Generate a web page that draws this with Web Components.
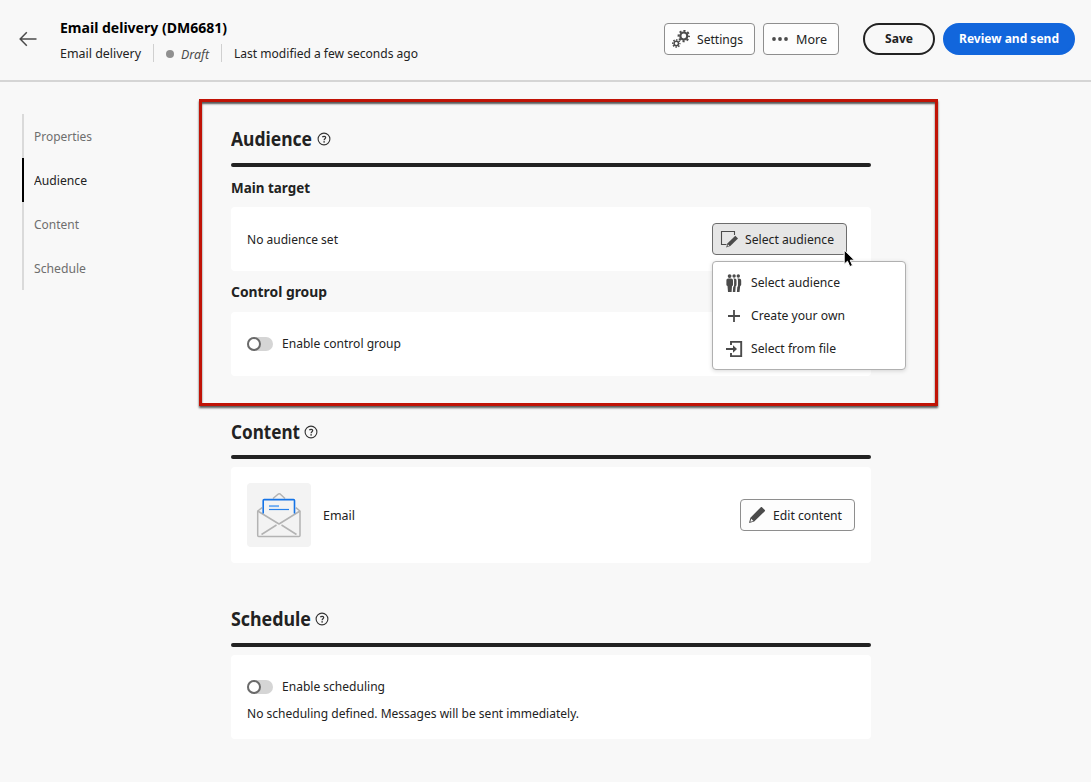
<!DOCTYPE html>
<html lang="en">
<head>
<meta charset="utf-8">
<title>Email delivery (DM6681)</title>
<style>
html,body{margin:0;height:100%}
body{background:#f8f8f8;color:#222;font:13px/18px "Noto Sans",sans-serif;overflow:hidden}
</style>
</head>
<body>
<delivery-page></delivery-page>
<script>
const define=(name,html,init)=>customElements.define(name,class extends HTMLElement{
  connectedCallback(){
    if(this.shadowRoot)return;
    const t=document.createElement('template');t.innerHTML=html;
    this.attachShadow({mode:'open'}).append(t.content.cloneNode(true));
    if(init)init.call(this,this.shadowRoot);
  }
});

/* One line of text, condensed so that it fills the width given in pixels. */
define('fit-label',`<style>:host{display:block;white-space:nowrap;flex:none}span{display:inline-block;vertical-align:top;white-space:nowrap;transform-origin:0 0}</style><span><slot></slot></span>`,function(root){
  const w=+this.getAttribute('w'),s=root.querySelector('span');
  this.style.width=w+'px';
  s.style.transform=`scaleX(${(w/s.getBoundingClientRect().width).toFixed(4)})`;
});

const ICONS={
 back:[18,16,'<path d="M17.500 8H1.300M7.800 1.300 1.200 8l6.600 6.700" fill="none" stroke="#4b4b4b" stroke-width="1.500"/>'],
 gears:[18,18,'<g fill="none" stroke="#4b4b4b"><circle cx="11.800" cy="6" r="3.500" stroke-width="2.200"/><circle cx="11.800" cy="6" r="5.200" stroke-width="2" stroke-dasharray="2.100 1.984" stroke-dashoffset="1.050"/><circle cx="4.300" cy="13.500" r="2.200" stroke-width="1.500"/><circle cx="4.300" cy="13.500" r="3.600" stroke-width="1.500" stroke-dasharray="1.500 1.327" stroke-dashoffset=".75"/></g>'],
 more:[18,18,'<g fill="#4b4b4b"><circle cx="3" cy="9" r="1.900"/><circle cx="9" cy="9" r="1.900"/><circle cx="15" cy="9" r="1.900"/></g>'],
 compose:[18,18,'<path d="M6.500 14.500H1.500V1.500H14.500V5" fill="none" stroke="#4b4b4b" stroke-width="1.100"/><path d="M15.300 5.700 18 8.400 10.300 16 6.100 17.500 7.600 13.300Z" fill="#4b4b4b"/><path d="m8 14.400 1.400 1.400-2 .7Z" fill="#e6e6e6"/>'],
 people:[18,18,'<g fill="#4b4b4b"><circle cx="4.600" cy="2.100" r="1.900"/><circle cx="9.100" cy="2" r="1.700"/><circle cx="13.300" cy="2" r="1.700"/><path d="M3.300 4.500h2.800c1.300 0 1.900.8 1.900 2v4.300c0 .8-.5 1.200-1 1.200l-.4 6H3l-.5-6c-.7 0-1.100-.5-1.100-1.200V6.500c0-1.200.7-2 1.900-2Z"/><path d="M8.300 4.500h1.400c1.200 0 1.800.8 1.800 2v4.300c0 .8-.4 1.200-.8 1.200l-.4 6H7.800l.4-5c.6-.6.9-1.100.9-2V6.300c0-.7-.3-1.300-.8-1.800Z"/><path d="M12.300 4.500h1.400c1.700 0 2.500.9 2.500 2.300v3.700c0 .9-.4 1.400-1 1.500l-.7 6h-2.600l.4-5c.5-.5.7-1.100.7-2V6.300c0-.7-.2-1.300-.7-1.800Z"/></g>'],
 plus:[18,18,'<path d="M9 3v12M3 9h12" stroke="#4b4b4b" stroke-width="1.800"/>'],
 file:[18,18,'<path d="M6 5V1.900H16.200V16.100H6V13M1 9H10" fill="none" stroke="#4b4b4b" stroke-width="1.900"/><path d="M8 5.200 12 9 8 12.800Z" fill="#4b4b4b"/>'],
 edit:[18,18,'<path d="M12.800 1.200c.4-.4.8-.4 1.200 0l2.800 2.800c.4.4.4.8 0 1.200L6.200 15.600 1 17l1.400-5.200Z" fill="#4b4b4b"/><path d="m3.300 12.800 2.100 2.100-3.100.8Z" fill="#fdfdfd"/>'],
 help:[14,14,'<circle cx="7" cy="7" r="5.900" fill="none" stroke="#333" stroke-width="1.100"/><path d="M5.300 5.200C6.200 4 8.700 4 8.700 5.600 8.700 6.600 7.100 6.900 7.100 8.200" fill="none" stroke="#333" stroke-width="1.200"/><circle cx="7.100" cy="9.900" r=".8" fill="#333"/>'],
 mail:[46,46,'<g fill="none" stroke="#b3b3b3" stroke-width="1.500" stroke-linejoin="round"><path d="M17 6.500 22 2.200q1.200-1 2.400 0L29 6.500"/><path d="M6.200 15.700 1.700 19v24.500q0 1 1 1H43q1 0 1-1V19L39.800 15.700"/><path d="M1.700 19 23 32 44 19M5.500 42.500l15-9.500M40.500 42.500l-15-9.500" /></g><path d="M7.200 21.500V8.600q0-1 1-1H37.500q1 0 1 1V21.500" fill="none" stroke="#1473e6" stroke-width="1.600"/><path d="M13 14.100h10" stroke="#72aef2" stroke-width="2"/><path d="M13 17.500h20" stroke="#2680eb" stroke-width="1.200"/>'],
 cursor:[14,20,'<path d="M1.200 1V15.200L4.500 12.200 6.800 17.600 9.500 16.400 7.200 11.200H11.500Z" fill="#000" stroke="#fff" stroke-width="1"/>']
};
define('ui-icon','<style>:host{display:block;flex:none}svg{display:block}</style>',function(root){
  const [w,h,body]=ICONS[this.getAttribute('name')];
  const t=document.createElement('template');
  t.innerHTML=`<svg width="${w}" height="${h}" viewBox="0 0 ${w} ${h}">${body}</svg>`;
  root.append(t.content);
});

define('ui-button',`<style>
:host{display:flex;align-items:center;box-sizing:border-box;height:32px;border:1px solid #8e8e8e;border-radius:4px;background:#fdfdfd;padding-left:7px;gap:7px;flex:none;color:#222;cursor:pointer}
:host([variant=active]){background:#e6e6e6;border-color:#6d6d6d}
:host([variant=outline]),:host([variant=cta]){border:2px solid #222;border-radius:16px;background:#f8f8f8;justify-content:center;padding:0 0 2px;font-weight:700}
:host([variant=cta]){background:#1266dc;border-color:#1266dc;color:#fff}
</style><slot name="icon"></slot><slot></slot>`);

define('page-header',`<style>
:host{display:flex;box-sizing:border-box;height:82px;border-bottom:2px solid #d5d5d5;padding:17px 16px 0 19px}
.back{padding-top:14px;width:41px;box-sizing:border-box}
.info{flex:1}
h1{margin:0;font-size:15px;line-height:20px;color:#000}
.meta{display:flex;align-items:center;height:18px;margin-top:7px}
.bar{width:1px;height:18px;background:#d0d0d0}
.dot{width:8px;height:8px;border-radius:50%;background:#909090;margin:1px 7px 0 12px}
.draft{font-style:italic;color:#4b4b4b;margin:1px 12px 0 0}
.actions{display:flex;padding-top:6px;gap:8px}
</style>
<div class="back"><ui-icon name="back"></ui-icon></div>
<div class="info"><h1><fit-label w="167">Email delivery (DM6681)</fit-label></h1>
<div class="meta"><fit-label w="81" style="margin-right:12px">Email delivery</fit-label><i class="bar"></i><i class="dot"></i><fit-label class="draft" w="28">Draft</fit-label><i class="bar" style="margin-right:12px"></i><fit-label w="184">Last modified a few seconds ago</fit-label></div></div>
<div class="actions">
<ui-button style="width:91px"><ui-icon slot="icon" name="gears"></ui-icon><fit-label w="46">Settings</fit-label></ui-button>
<ui-button style="width:76px"><ui-icon slot="icon" name="more"></ui-icon><fit-label w="31">More</fit-label></ui-button>
<ui-button variant="outline" style="width:72px;margin-left:16px"><fit-label w="28">Save</fit-label></ui-button>
<ui-button variant="cta" style="width:132px"><fit-label w="100">Review and send</fit-label></ui-button>
</div>`);

define('side-nav','<style>:host{display:block;margin:32px 0 0 22px;width:178px;flex:none}</style><slot></slot>');
define('nav-item',`<style>:host{display:flex;align-items:center;box-sizing:border-box;height:44px;padding-left:10px;border-left:2px solid #dadada;color:#6e6e6e}
:host([active]){border-color:#000;color:#222}</style><slot></slot>`);

define('page-section',`<style>
:host{display:block}
header{display:flex;align-items:center;gap:5px;height:24px;font-size:19px;font-weight:700;line-height:24px}
hr{border:0;margin:var(--rule-gap,12px) 0 0;height:4px;border-radius:2px;background:#222}
</style><header><slot name="title"></slot><ui-icon name="help"></ui-icon></header><hr><slot></slot>`);
define('sub-title','<style>:host{display:block;font-size:15px;font-weight:700;line-height:20px}</style><slot></slot>');
define('white-card','<style>:host{display:flex;align-items:center;box-sizing:border-box;background:#fff;border-radius:4px;padding:0 16px}</style><slot></slot>');
define('toggle-row',`<style>:host{display:flex;align-items:center;gap:9px;height:18px}
.t{width:26px;height:14px;border-radius:7px;background:#d5d5d5;margin-top:2px}
.k{box-sizing:border-box;width:14px;height:14px;border:2px solid #6a6a6a;border-radius:50%;background:#fff}</style><div class="t"><div class="k"></div></div><slot></slot>`);
define('drop-menu',`<style>:host{display:block;position:absolute;left:0;top:38px;z-index:2;box-sizing:border-box;width:194px;height:109px;padding:4px 0;background:#fff;border:1px solid #b0b0b0;border-radius:4px;box-shadow:0 1px 4px rgba(0,0,0,.15)}</style><slot></slot>`);
define('menu-row','<style>:host{display:flex;align-items:center;height:33px;padding-left:12px;gap:8px}::slotted(fit-label){margin-bottom:1px}</style><slot name="icon"></slot><slot></slot>');

define('audience-picker',`<style>:host{display:block;position:relative;margin-left:auto;margin-right:8px}
.cur{position:absolute;left:131px;top:26px;z-index:3}</style>
<ui-button variant="active" style="width:135px"><ui-icon slot="icon" name="compose"></ui-icon><fit-label w="89">Select audience</fit-label></ui-button>
<drop-menu>
<menu-row><ui-icon slot="icon" name="people"></ui-icon><fit-label w="89">Select audience</fit-label></menu-row>
<menu-row><ui-icon slot="icon" name="plus"></ui-icon><fit-label w="94">Create your own</fit-label></menu-row>
<menu-row><ui-icon slot="icon" name="file"></ui-icon><fit-label w="85">Select from file</fit-label></menu-row>
</drop-menu><ui-icon class="cur" name="cursor"></ui-icon>`);

define('callout-frame',`<style>:host{position:absolute;left:-32px;top:-28px;right:-67px;height:307px;box-sizing:border-box;border:3px solid #c01306;box-shadow:0 2px 2px rgba(0,0,0,.65),inset 0 2px 2px rgba(0,0,0,.65);pointer-events:none;z-index:1}</style>`);

define('delivery-page',`<style>
:host{display:block}
.body{display:flex}
main{width:640px;padding-top:45px;margin-left:31px}
.aud{position:relative;height:293px}
.tile{width:64px;height:64px;background:#f3f3f3;border-radius:4px;display:flex;align-items:center;justify-content:center;margin-right:12px}
</style>
<page-header></page-header>
<div class="body">
<side-nav>
<nav-item><fit-label w="58">Properties</fit-label></nav-item>
<nav-item active><fit-label w="53">Audience</fit-label></nav-item>
<nav-item><fit-label w="45">Content</fit-label></nav-item>
<nav-item><fit-label w="52">Schedule</fit-label></nav-item>
</side-nav>
<main>
<page-section class="aud"><fit-label slot="title" w="81">Audience</fit-label>
<sub-title style="margin:10px 0"><fit-label w="79">Main target</fit-label></sub-title>
<white-card style="height:64px"><fit-label w="91">No audience set</fit-label><audience-picker></audience-picker></white-card>
<sub-title style="margin:10px 0 11px"><fit-label w="96">Control group</fit-label></sub-title>
<white-card style="height:64px"><toggle-row style="margin-bottom:2px"><fit-label w="119">Enable control group</fit-label></toggle-row></white-card>
<callout-frame></callout-frame>
</page-section>
<page-section style="--rule-gap:11px"><fit-label slot="title" w="69" style="margin-right:-1px">Content</fit-label>
<white-card style="height:96px;margin-top:8px"><div class="tile"><ui-icon name="mail"></ui-icon></div><fit-label w="32">Email</fit-label>
<ui-button style="width:115px;margin-left:auto"><ui-icon slot="icon" name="edit"></ui-icon><fit-label w="69">Edit content</fit-label></ui-button></white-card>
</page-section>
<page-section style="margin-top:44px"><fit-label slot="title" w="80" style="margin-right:-1px">Schedule</fit-label>
<white-card style="height:84px;margin-top:8px;display:block;padding-top:22px"><toggle-row><fit-label w="103">Enable scheduling</fit-label></toggle-row><fit-label w="332" style="margin-top:9px">No scheduling defined. Messages will be sent immediately.</fit-label></white-card>
</page-section>
</main>
</div>`);
</script>
</body>
</html>
